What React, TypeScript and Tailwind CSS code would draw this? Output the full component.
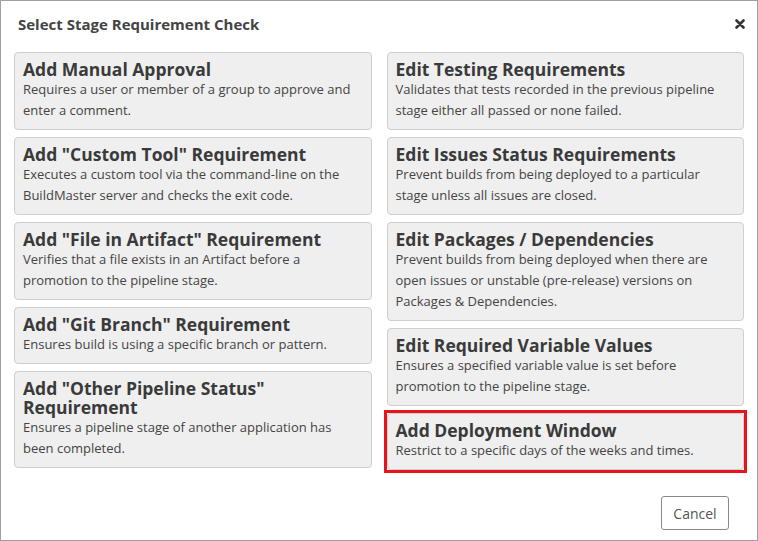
type Item = { title: string[]; lines: string[]; highlight?: boolean };

const left: Item[] = [
  { title: ["Add Manual Approval"], lines: ["Requires a user or member of a group to approve and", "enter a comment."] },
  { title: ['Add "Custom Tool" Requirement'], lines: ["Executes a custom tool via the command-line on the", "BuildMaster server and checks the exit code."] },
  { title: ['Add "File in Artifact" Requirement'], lines: ["Verifies that a file exists in an Artifact before a", "promotion to the pipeline stage."] },
  { title: ['Add "Git Branch" Requirement'], lines: ["Ensures build is using a specific branch or pattern."] },
  { title: ['Add "Other Pipeline Status"', "Requirement"], lines: ["Ensures a pipeline stage of another application has", "been completed."] },
];

const right: Item[] = [
  { title: ["Edit Testing Requirements"], lines: ["Validates that tests recorded in the previous pipeline", "stage either all passed or none failed."] },
  { title: ["Edit Issues Status Requirements"], lines: ["Prevent builds from being deployed to a particular", "stage unless all issues are closed."] },
  { title: ["Edit Packages / Dependencies"], lines: ["Prevent builds from being deployed when there are", "open issues or unstable (pre-release) versions on", "Packages & Dependencies."] },
  { title: ["Edit Required Variable Values"], lines: ["Ensures a specified variable value is set before", "promotion to the pipeline stage."] },
  { title: ["Add Deployment Window"], lines: ["Restrict to a specific days of the weeks and times."], highlight: true },
];

function Card({ item }: { item: Item }) {
  const card = (
    <div className="rounded-[4px] border border-[#cfcfcf] bg-[#efefef] px-2 pt-[7px] pb-[8px] text-[#333]">
      <h3 className="text-[17.5px] font-bold leading-[19px] text-[#3a3a3a]">
        {item.title.map((t) => (
          <span key={t} className="block whitespace-nowrap">{t}</span>
        ))}
      </h3>
      <p className="text-[13px] leading-[21px] text-[#444]">
        {item.lines.map((l) => (
          <span key={l} className="block whitespace-nowrap">{l}</span>
        ))}
      </p>
    </div>
  );
  if (!item.highlight) return card;
  return <div className="-m-[3px] border-[3px] border-[#e8141c]">{card}</div>;
}

export default function App() {
  return (
    <div className="h-[541px] w-[758px] border border-[#a0a0a0] bg-white font-['Open_Sans',sans-serif]">
      <div className="flex items-center justify-between pl-[17px] pr-[12px] pt-[12px]">
        <h2 className="text-[15px] font-bold leading-[22px] text-[#444]">Select Stage Requirement Check</h2>
        <svg width="10" height="10" viewBox="0 0 10 10" aria-hidden="true">
          <path d="M1.5 1.5 L8.5 8.5 M8.5 1.5 L1.5 8.5" stroke="#333" strokeWidth="2.6" strokeLinecap="round" />
        </svg>
      </div>
      <div className="mt-[17px] grid grid-cols-2 items-start gap-x-[15px] px-[13px]">
        <div className="flex flex-col gap-[7px]">
          {left.map((i) => (
            <Card key={i.title[0]} item={i} />
          ))}
        </div>
        <div className="flex flex-col gap-[7px]">
          {right.map((i) => (
            <Card key={i.title[0]} item={i} />
          ))}
        </div>
      </div>
      <div className="flex justify-end pr-[28px] pt-[26px]">
        <button className="h-[34px] w-[68px] rounded-[3px] border border-[#8a8a8a] bg-white text-[14px] text-[#555]">
          Cancel
        </button>
      </div>
    </div>
  );
}
